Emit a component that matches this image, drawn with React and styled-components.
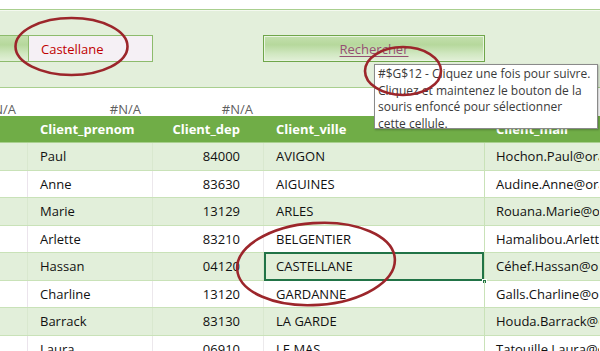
import React from "react";
import styled, { createGlobalStyle, css } from "styled-components";

const GlobalStyle = createGlobalStyle`
  html, body { margin: 0; padding: 0; background: #ffffff; }
  body { font-family: "Open Sans", "Noto Sans", "Liberation Sans", sans-serif; overflow: hidden; }
`;

const Sheet = styled.div`
  position: relative;
  width: 600px;
  height: 351px;
  overflow: hidden;
  background: #ffffff;
`;

/* search panel above the table */
const Panel = styled.div`
  margin-top: 9px;
  height: 52px;
  border-top: 1px solid #a9cf8f;
  border-bottom: 1px solid #a9cf8f;
  box-shadow: inset 0 1px 0 #f4f9f0;
  background: #e3efdb;
  padding-top: 25px;
  box-sizing: content-box;
  display: flex;
  align-items: flex-start;
`;

const greenFill = css`
  background: linear-gradient(#c3e0ad 0%, #b6d89c 35%, #d0e7c0 70%, #e2f0d8 100%);
`;

const Stub = styled.div`
  width: 28px;
  height: 27px;
  box-sizing: border-box;
  border: 1px solid #8dbb6c;
  border-left: none;
  border-right: none;
  ${greenFill};
`;

const SearchField = styled.div`
  width: 125px;
  height: 27px;
  box-sizing: border-box;
  border: 1px solid #8dbb6c;
  background: #f5f0f5;
  display: flex;
  align-items: center;
  padding-left: 12px;
  color: #c00000;
  font-size: 13px;
`;

const SearchButton = styled.div`
  margin-left: 110px;
  width: 222px;
  height: 27px;
  box-sizing: border-box;
  border: 1px solid #6fa64a;
  box-shadow: inset 0 0 0 1px #eaf4e2;
  ${greenFill};
  display: flex;
  align-items: center;
  justify-content: center;
  color: #954f72;
  font-size: 13px;
  text-decoration: underline;
  text-underline-offset: 2px;
`;

/* row of error values between panel and table */
const ErrorRow = styled.div`
  height: 28px;
  display: grid;
  grid-template-columns: 16px 125px 112px;
  align-items: end;
  font-size: 13px;
  color: #5f5f5f;
`;

const ErrorCell = styled.div`
  display: flex;
  justify-content: flex-end;
  white-space: nowrap;
  line-height: 13px;
`;

const Table = styled.div`
  display: flex;
  flex-direction: column;
`;

const Row = styled.div`
  display: grid;
  grid-template-columns: 28px 125px 111px 221px 115px;
  height: ${(p) => (p.$header ? "27px" : "27.5px")};
  box-sizing: border-box;
  background: ${(p) => (p.$header ? "#70ad47" : p.$band ? "#e2efda" : "#ffffff")};
  border-bottom: 1px solid ${(p) => (p.$header ? "#a9d08e" : "#c9e2b8")};
  font-size: 13px;
  color: ${(p) => (p.$header ? "#ffffff" : "#111111")};
  font-weight: ${(p) => (p.$header ? 700 : 400)};
`;

const Cell = styled.div`
  position: relative;
  display: flex;
  align-items: center;
  white-space: nowrap;
  overflow: hidden;
  box-sizing: border-box;
  padding-left: ${(p) => p.$pad ?? 12}px;
  padding-right: ${(p) => (p.$right ? 23 : 0)}px;
  justify-content: ${(p) => (p.$right ? "flex-end" : "flex-start")};
  border-right: 1px solid ${(p) => p.$line || "transparent"};
  ${(p) =>
    p.$selected &&
    css`
      overflow: visible;
      box-shadow: inset 0 0 0 2px #217346;
      margin: -1px 0 -1px 0;
    `}
`;

const FillHandle = styled.span`
  position: absolute;
  right: -3px;
  bottom: -3px;
  width: 5px;
  height: 5px;
  background: #217346;
  border: 1px solid #ffffff;
  box-sizing: border-box;
`;

const Tip = styled.div`
  position: absolute;
  left: 374px;
  top: 64px;
  width: 224px;
  height: 65px;
  box-sizing: border-box;
  background: #ffffff;
  border: 1px solid #8a8a8a;
  box-shadow: 1px 1px 2px rgba(0, 0, 0, 0.25);
  padding: 1px 0 0 3px;
  font-size: 12px;
  line-height: 16.5px;
  color: #3a3a3a;
`;

const Marks = styled.svg`
  position: absolute;
  left: 0;
  top: 0;
  pointer-events: none;
`;

const rows = [
  ["Paul", "84000", "AVIGON", "Hochon.Paul@orange.fr"],
  ["Anne", "83630", "AIGUINES", "Audine.Anne@orange.fr"],
  ["Marie", "13129", "ARLES", "Rouana.Marie@orange.fr"],
  ["Arlette", "83210", "BELGENTIER", "Hamalibou.Arlette@orange.fr"],
  ["Hassan", "04120", "CASTELLANE", "Céhef.Hassan@orange.fr"],
  ["Charline", "13120", "GARDANNE", "Galls.Charline@orange.fr"],
  ["Barrack", "83130", "LA GARDE", "Houda.Barrack@orange.fr"],
  ["Laura", "06910", "LE MAS", "Tatouille.Laura@orange.fr"],
];

export default function App() {
  return (
    <>
      <GlobalStyle />
      <Sheet>
        <Panel>
          <Stub />
          <SearchField>Castellane</SearchField>
          <SearchButton>Rechercher</SearchButton>
        </Panel>

        <ErrorRow>
          <ErrorCell>#N/A</ErrorCell>
          <ErrorCell>#N/A</ErrorCell>
          <ErrorCell>#N/A</ErrorCell>
        </ErrorRow>

        <Table>
          <Row $header>
            <Cell />
            <Cell>Client_prenom</Cell>
            <Cell $right>Client_dep</Cell>
            <Cell>Client_ville</Cell>
            <Cell $pad={11}>Client_mail</Cell>
          </Row>
          {rows.map(([prenom, dep, ville, mail], i) => {
            const band = i % 2 === 0;
            const selected = ville === "CASTELLANE";
            return (
              <Row key={prenom} $band={band}>
                <Cell $line={band ? "#d9e8cf" : "#ebe4ec"} />
                <Cell $line={band ? "#d9e8cf" : "#ece8ec"}>{prenom}</Cell>
                <Cell $right $line={band ? "#d9e8cf" : "#eceaec"}>{dep}</Cell>
                <Cell $line="#c9e2b8" $selected={selected}>
                  {ville}
                  {selected && <FillHandle />}
                </Cell>
                <Cell $pad={11}>{mail}</Cell>
              </Row>
            );
          })}
        </Table>

        <Tip>
          #$G$12 - Cliquez une fois pour suivre.
          <br />
          Cliquez et maintenez le bouton de la
          <br />
          souris enfoncé pour sélectionner
          <br />
          cette cellule.
        </Tip>

        <Marks width="600" height="351" viewBox="0 0 600 351">
          <g fill="none" stroke="#9c262b" strokeWidth="2.6">
            <ellipse cx="71.5" cy="46.5" rx="56" ry="28.5" />
            <ellipse cx="403" cy="71" rx="38" ry="24" />
            <ellipse cx="316" cy="264" rx="79" ry="41" transform="rotate(-4 316 264)" />
          </g>
        </Marks>
      </Sheet>
    </>
  );
}
